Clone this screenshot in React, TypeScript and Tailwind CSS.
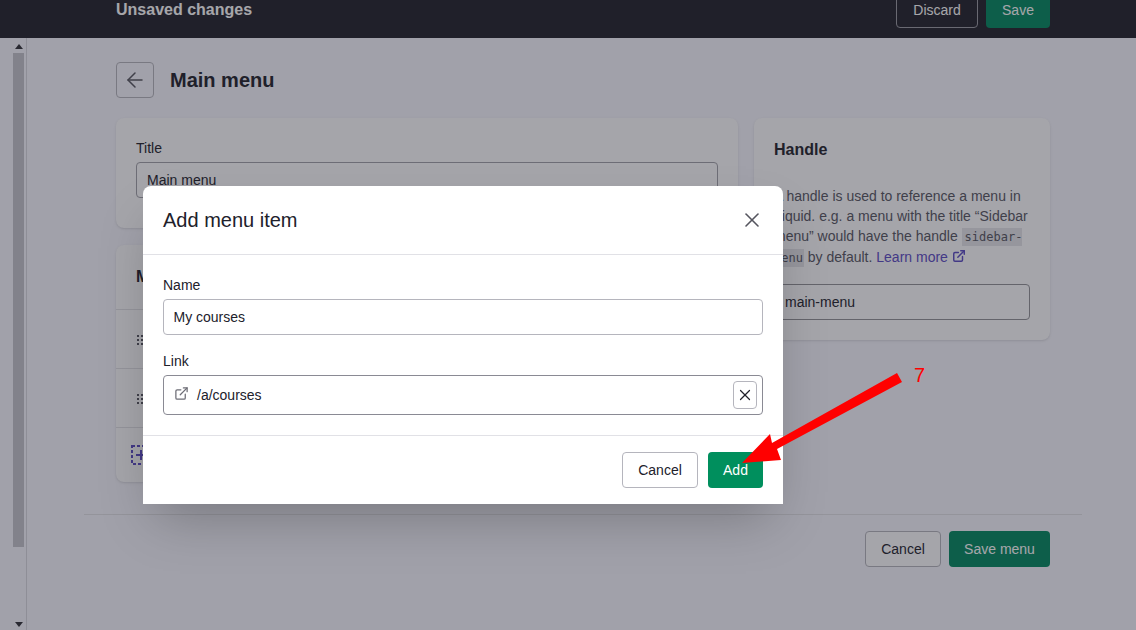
import { ArrowLeft, ExternalLink, X } from "lucide-react";

const font = { fontFamily: '"Liberation Sans", Arial, sans-serif' };

const Grip = () => {
	return (
		<svg width="7" height="10" viewBox="0 0 7 10" className="shrink-0 text-[#55555f]" fill="currentColor">
			<rect x="0" y="0" width="2" height="2" />
			<rect x="4" y="0" width="2" height="2" />
			<rect x="0" y="4" width="2" height="2" />
			<rect x="4" y="4" width="2" height="2" />
			<rect x="0" y="8" width="2" height="2" />
			<rect x="4" y="8" width="2" height="2" />
		</svg>
	);
};

const Scrollbar = () => {
	return (
		<div className="ml-3 w-[15px] shrink-0 flex flex-col border-r border-[#d8d8e0]">
			<svg width="8" height="5" viewBox="0 0 8 5" className="ml-[3px] mt-[6px] text-[#303038]" fill="currentColor">
				<path d="M4 0 8 5H0z" />
			</svg>
			<div className="ml-[1px] mt-[4px] h-[494px] w-[11px] bg-[#c3c3cb]" />
			<div className="flex-1" />
			<svg width="8" height="5" viewBox="0 0 8 5" className="ml-[3px] mb-[3px] text-[#303038]" fill="currentColor">
				<path d="M0 0h8L4 5z" />
			</svg>
		</div>
	);
};

const Page = () => {
	return (
		<div className="h-[630px] flex flex-col bg-[#f7f7ff] overflow-hidden">
			{/* top bar */}
			<div className="h-[38px] shrink-0 bg-[#21212b] pl-[116px] pr-[86px] pb-[10px] flex items-end justify-between">
				<div className="text-white font-bold text-base leading-5 mb-[8px]">Unsaved changes</div>
				<div className="flex items-center gap-2">
					<button className="h-9 w-[82px] rounded border border-[#9a9aa2] text-white text-sm">Discard</button>
					<button className="h-9 w-[64px] rounded bg-[#00885f] text-white text-sm">Save</button>
				</div>
			</div>

			<div className="flex-1 flex min-h-0">
				<Scrollbar />

				<div className="flex-1 pl-[57px] pr-[54px] flex flex-col">
					{/* heading */}
					<div className="ml-[32px] mt-[24px] flex items-center gap-4">
						<button className="h-9 w-[38px] rounded border border-[#b5b5bd] flex items-center justify-center text-[#55555f]">
							<ArrowLeft size={24} strokeWidth={1.5} />
						</button>
						<h1 className="text-xl font-bold text-[#21212b]">Main menu</h1>
					</div>

					<div className="ml-[32px] mt-[20px] flex gap-4 items-start">
						<div className="w-[622px] flex flex-col gap-[17px]">
							{/* title card */}
							<div className="h-[110px] rounded-lg bg-[#fdfdff] shadow-sm px-5 pt-5">
								<div className="text-sm leading-5 text-[#21212b]">Title</div>
								<div className="mt-[4px] h-9 rounded border border-[#a0a0a8] px-[10px] flex items-center text-sm text-[#21212b]">
									Main menu
								</div>
							</div>

							{/* items card */}
							<div className="h-[237px] rounded-lg bg-[#fdfdff] shadow-sm flex flex-col">
								<div className="h-[65px] px-5 flex items-center font-bold text-base text-[#21212b] border-b border-[#e1e1e6]">
									Menu items
								</div>
								<div className="h-[59px] pl-[21px] pt-[2px] flex items-center border-b border-[#e1e1e6]">
									<Grip />
								</div>
								<div className="h-[59px] pl-[21px] pt-[2px] flex items-center border-b border-[#e1e1e6]">
									<Grip />
								</div>
								<div className="flex-1 px-[15px] flex items-center">
									<svg width="20" height="20" viewBox="0 0 20 20" fill="none" stroke="#5a4ac4" strokeWidth="2">
										<rect x="1" y="1" width="18" height="18" strokeDasharray="3 2" />
										<path d="M10 5v10M5 10h10" />
									</svg>
								</div>
							</div>
						</div>

						{/* handle card */}
						<div className="w-[296px] h-[222px] rounded-lg bg-[#fdfdff] shadow-sm px-5 pt-[21px]">
							<h2 className="font-bold text-base leading-[22px] text-[#21212b]">Handle</h2>
							<p className="mt-[25px] text-sm leading-5 text-[#55555f]">
								A handle is used to reference a menu in Liquid. e.g. a menu with the title “Sidebar menu” would have the handle{" "}
								<code className="bg-[#e4e4ea] pl-[3px] pr-[1px] py-[2px] text-xs" style={{ fontFamily: '"DejaVu Sans Mono", monospace' }}>
									sidebar-menu
								</code>{" "}
								<span className="leading-[22px]">by default. </span>
								<span className="text-[#5a4ac4]">
									Learn more <ExternalLink size={14} className="inline -mt-1" strokeWidth={2.5} />
								</span>
							</p>
							<div className="mt-[16px] h-9 rounded border border-[#919196] px-[10px] flex items-center text-sm text-[#21212b]">
								main-menu
							</div>
						</div>
					</div>

					{/* footer */}
					<div className="mt-[32px] h-px bg-[#e1e1e6]" />
					<div className="mt-[16px] mr-[32px] flex justify-end gap-2">
						<button className="h-9 w-[76px] rounded border border-[#b5b5bd] bg-[#fdfdff] text-sm text-[#21212b]">Cancel</button>
						<button className="h-9 w-[101px] rounded bg-[#00885f] text-sm text-white">Save menu</button>
					</div>
				</div>
			</div>
		</div>
	);
};

const Modal = () => {
	return (
		<div className="absolute left-[143px] top-[186px] w-[640px] h-[318px] bg-white rounded-t-lg shadow-2xl flex flex-col">
			<div className="h-[69px] shrink-0 pl-5 pr-[19px] flex items-center justify-between border-b border-[#e1e1e6]">
				<h2 className="text-xl text-[#21212b]">Add menu item</h2>
				<X size={24} strokeWidth={1.6} className="text-[#55555f]" />
			</div>

			<div className="flex-1 px-5 pt-[20px]">
				<div className="text-sm leading-5 text-[#21212b]">Name</div>
				<div className="mt-[4px] h-9 rounded border border-[#b5b5bd] px-[9.5px] flex items-center text-sm text-[#21212b]">
					My courses
				</div>
				<div className="mt-[16px] text-sm leading-5 text-[#21212b]">Link</div>
				<div className="mt-[4px] h-10 rounded border border-[#8a8a94] pl-[10px] pr-[5px] flex items-center text-sm text-[#21212b]">
					<ExternalLink size={15} strokeWidth={2} className="text-[#6d6d76] -mt-[3px]" />
					<span className="ml-2 flex-1">/a/courses</span>
					<button className="h-7 w-6 rounded border border-[#b5b5bd] flex items-center justify-center">
						<X size={18} strokeWidth={1.6} />
					</button>
				</div>
			</div>

			<div className="h-[69px] shrink-0 px-5 border-t border-[#e1e1e6] flex items-center justify-end gap-[10px]">
				<button className="h-9 w-[76px] rounded border border-[#b5b5bd] text-sm text-[#21212b]">Cancel</button>
				<button className="h-9 w-[55px] rounded bg-[#008f5d] text-sm text-white">Add</button>
			</div>
		</div>
	);
};

const App = () => {
	return (
		<div className="relative w-[1136px] h-[630px] overflow-hidden" style={font}>
			<Page />

			{/* backdrop */}
			<div className="absolute inset-0 bg-[#21212b]/40" />

			<Modal />

			{/* red annotation */}
			<svg className="absolute left-0 top-0 pointer-events-none" width="1136" height="630" viewBox="0 0 1136 630">
				<polygon points="897,373 902,382 777,449 781,460 742,463 770,434 772,443" fill="#ff0000" />
			</svg>
			<div className="absolute left-[914px] top-[361px] text-xl leading-7 text-[#ff0000]">7</div>
		</div>
	);
};

export default App;
